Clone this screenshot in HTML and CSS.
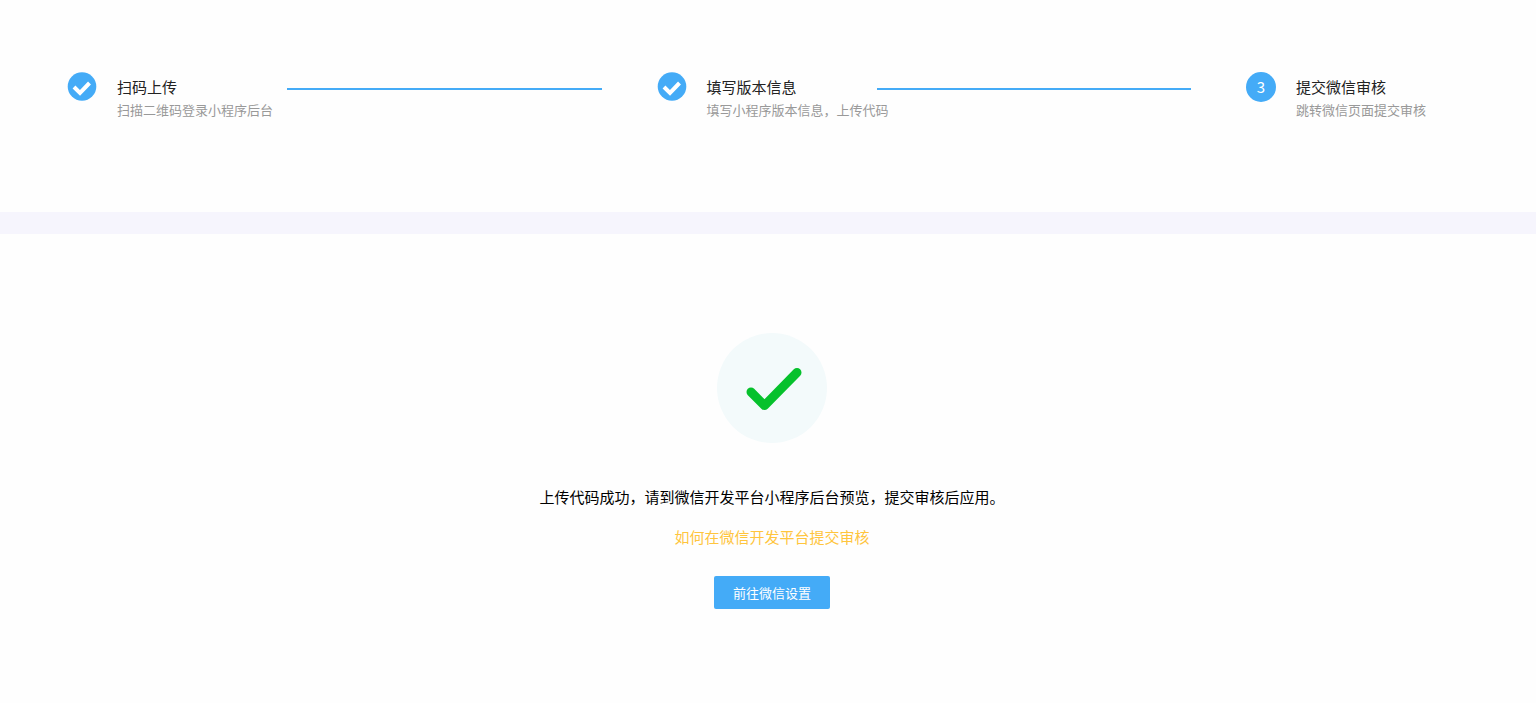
FILE: index.html
```html
<!DOCTYPE html>
<html lang="zh-CN">
<head>
  <meta charset="UTF-8">
  <title>提交微信审核</title>
  <link rel="stylesheet" href="styles.css">
</head>
<body>

<ol class="steps">
  <li class="step">
    <svg class="step-icon" viewBox="0 0 30 30" aria-hidden="true">
      <circle cx="15" cy="14.5" r="14.3" fill="#44abf7"/>
      <path d="M7 15 L13 21 L22.500 11" fill="none" stroke="#fff" stroke-width="4"/>
    </svg>
    <div class="step-text">
      <div class="step-title">扫码上传</div>
      <div class="step-desc">扫描二维码登录小程序后台</div>
    </div>
    <span class="step-line"></span>
  </li>
  <li class="step">
    <svg class="step-icon" viewBox="0 0 30 30" aria-hidden="true">
      <circle cx="15" cy="14.5" r="14.3" fill="#44abf7"/>
      <path d="M7 15 L13 21 L22.500 11" fill="none" stroke="#fff" stroke-width="4"/>
    </svg>
    <div class="step-text">
      <div class="step-title">填写版本信息</div>
      <div class="step-desc">填写小程序版本信息，上传代码</div>
    </div>
    <span class="step-line"></span>
  </li>
  <li class="step step-last">
    <span class="step-icon step-number">3</span>
    <div class="step-text">
      <div class="step-title">提交微信审核</div>
      <div class="step-desc">跳转微信页面提交审核</div>
    </div>
  </li>
</ol>

<main class="result">
  <svg class="result-icon" viewBox="0 0 110 110" aria-hidden="true">
    <circle cx="55" cy="55" r="55" fill="#f3fafb"/>
    <path d="M34 59 L47.5 72.5 L80 39.5" fill="none" stroke="#06c12c" stroke-width="9" stroke-linecap="round" stroke-linejoin="round"/>
  </svg>
  <p class="result-text">上传代码成功，请到微信开发平台小程序后台预览，提交审核后应用。</p>
  <a class="result-link" href="#">如何在微信开发平台提交审核</a>
  <button class="btn" type="button">前往微信设置</button>
</main>

</body>
</html>
```

FILE: styles.css
```css
* { box-sizing: border-box; }
body {
  margin: 0;
  background: #fefefe;
  color: #000;
  font-family: "Noto Sans CJK SC", sans-serif;
  font-size: 15px;
  line-height: 24px;
}
.steps {
  display: flex;
  margin: 0;
  padding: 72px 70px 91px 67px;
  list-style: none;
  border-bottom: 22px solid #f6f5fd;
}
.step {
  display: flex;
  flex: 1;
  align-items: flex-start;
}
.step-last { flex: none; }
.step-icon {
  flex: none;
  width: 30px;
  height: 30px;
  margin-right: 20px;
}
.step-number {
  border-radius: 50%;
  background: #44abf7;
  color: #fff;
  line-height: 30px;
  text-align: center;
}
.step-text {
  width: 170px;
  padding-top: 3px;
  white-space: nowrap;
}
.step-title { color: #222; }
.step-desc {
  color: #999;
  font-size: 13px;
  line-height: 22px;
}
.step-line {
  flex: 1;
  height: 2px;
  margin: 16px 55px 0 0;
  background: #44abf7;
}
.result {
  display: flex;
  flex-direction: column;
  align-items: center;
  padding: 99px 0 94px 8px;
}
.result-icon {
  width: 110px;
  height: 110px;
}
.result-text { margin: 42px 0 16px; }
.result-link {
  color: #ffc53d;
  text-decoration: none;
}
.btn {
  height: 33px;
  margin-top: 27px;
  padding: 0 19px;
  border: none;
  border-radius: 2px;
  background: #44abf7;
  color: #fff;
  font-family: inherit;
  font-size: 13px;
  cursor: pointer;
}
```
